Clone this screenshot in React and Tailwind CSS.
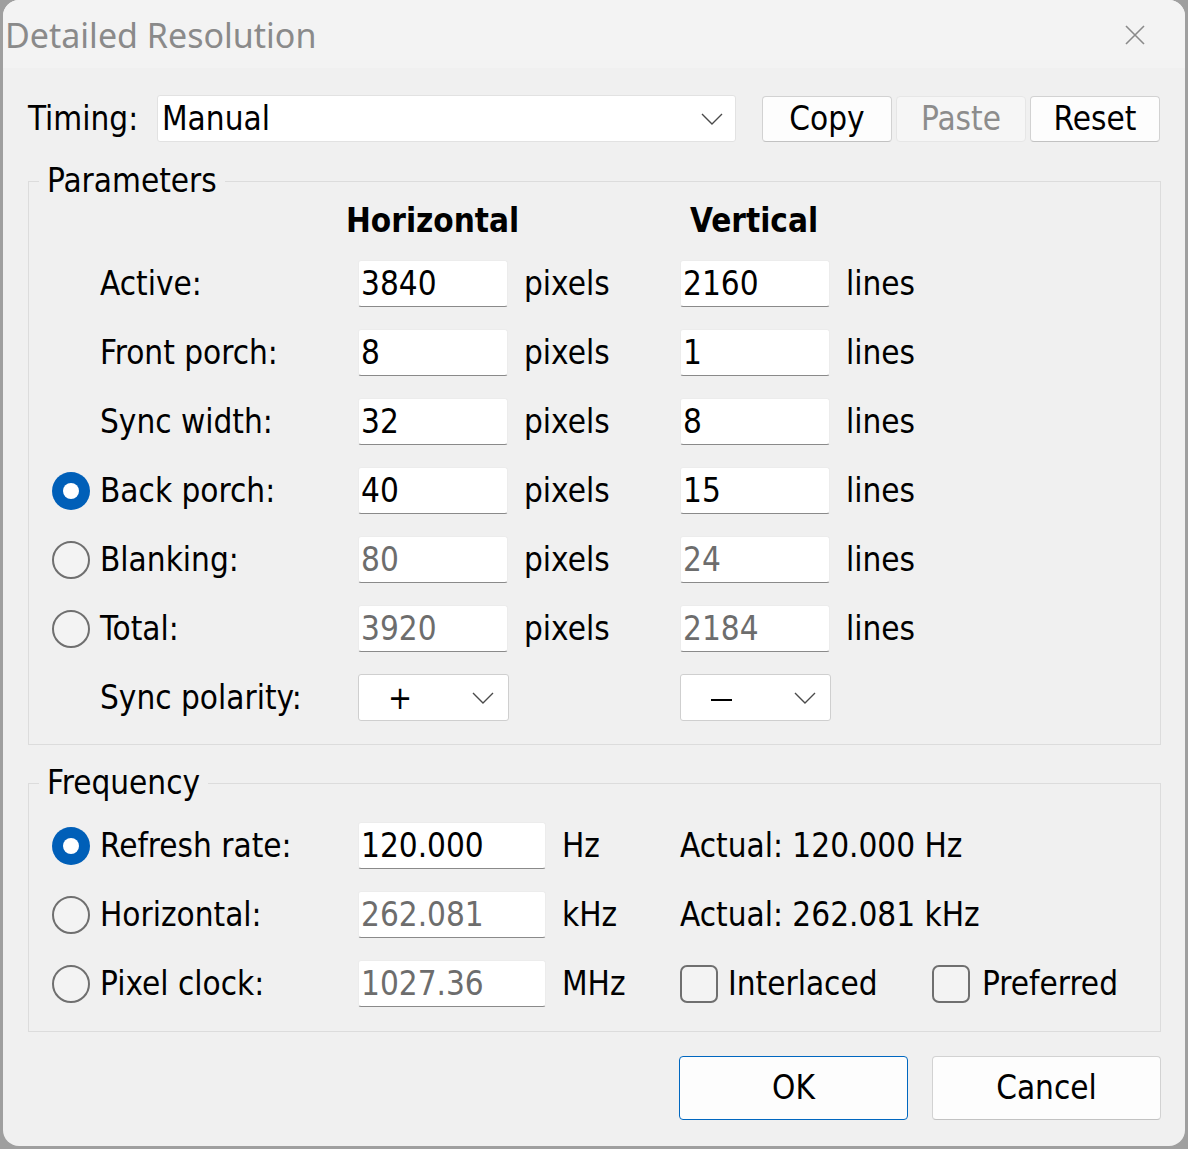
const body = { fontFamily: '"DejaVu Sans Condensed", "DejaVu Sans", sans-serif', fontStretch: 'condensed' }

function Chevron({ className }) {
  return (
    <svg className={className} width="22" height="12" viewBox="0 0 22 12" fill="none">
      <path d="M1 1 L11 11 L21 1" stroke="#4a4a4a" strokeWidth="1.4" />
    </svg>
  )
}

function Radio({ checked }) {
  if (checked) {
    return (
      <div className="w-[38px] h-[38px] rounded-full bg-[#005fb8] flex items-center justify-center shrink-0">
        <div className="w-[16px] h-[16px] rounded-full bg-white" />
      </div>
    )
  }
  return <div className="w-[38px] h-[38px] rounded-full border-[2px] border-[#6f6f6f] bg-[#f3f3f3] shrink-0" />
}

function Check() {
  return <div className="w-[38px] h-[38px] rounded-[7px] border-[2px] border-[#6f6f6f] bg-[#f3f3f3] shrink-0" />
}

function Field({ value, disabled, w = 'w-[150px]' }) {
  return (
    <div
      className={`${w} h-[47px] shrink-0 bg-white border border-[#ececec] border-b-[#8a8a8a] rounded-[3px] pl-[2px] flex items-center text-[33px] leading-none ${disabled ? 'text-[#6d6d6d]' : 'text-black'}`}
    >
      {value}
    </div>
  )
}

function ParamRow({ radio, label, h, v, disabled }) {
  return (
    <div className="h-[69px] flex items-center">
      <div className="w-[38px] shrink-0">{radio !== undefined && <Radio checked={radio} />}</div>
      <div className="w-[268px] shrink-0 pl-[10px]">{label}</div>
      <Field value={h} disabled={disabled} />
      <div className="w-[172px] shrink-0 pl-[16px]">pixels</div>
      <Field value={v} disabled={disabled} />
      <div className="pl-[16px]">lines</div>
    </div>
  )
}

function Polarity({ sign }) {
  return (
    <div className="w-[151px] h-[47px] shrink-0 bg-white border border-[#cfcfcf] rounded-[3px] flex items-center relative">
      {sign === '+' ? (
        <span className="absolute left-[29px] text-[32px] leading-none">+</span>
      ) : (
        <span className="absolute left-[30px] top-[24px] w-[21px] h-[2px] bg-black" />
      )}
      <Chevron className="absolute right-[14px]" />
    </div>
  )
}

function FreqRow({ radio, label, value, disabled, unit, children }) {
  return (
    <div className="h-[69px] flex items-center">
      <Radio checked={radio} />
      <div className="w-[268px] shrink-0 pl-[10px]">{label}</div>
      <Field value={value} disabled={disabled} w="w-[188px]" />
      <div className="w-[134px] shrink-0 pl-[16px]">{unit}</div>
      {children}
    </div>
  )
}

export default function App() {
  return (
    <div className="w-[1188px] h-[1149px] bg-[#9f9f9f] pl-[3px] pr-[3px] pb-[3px]" style={body}>
      <div className="w-[1182px] h-[1146px] bg-[#f0f0f0] rounded-[16px] overflow-hidden flex flex-col text-[33px] text-black">
        {/* title bar */}
        <div className="h-[68px] bg-[#f3f3f3] flex items-center justify-between shrink-0">
          <span
            className="pl-[2px] text-[34px] text-[#8a8a8a] leading-none mt-[2px]"
            style={{ fontFamily: '"Noto Sans", "Open Sans", sans-serif', fontStretch: 'normal' }}
          >
            Detailed Resolution
          </span>
          <svg className="mr-[40px] mt-[2px]" width="20" height="20" viewBox="0 0 20 20">
            <path d="M1 1 L19 19 M19 1 L1 19" stroke="#8a8a8a" strokeWidth="1.6" />
          </svg>
        </div>

        <div className="pl-[25px] pr-[22px] pt-[27px] flex flex-col">
          {/* timing row */}
          <div className="h-[47px] flex items-center">
            <span className="w-[129px] shrink-0">Timing:</span>
            <div className="w-[579px] h-[47px] bg-white border border-[#e2e2e2] rounded-[3px] flex items-center justify-between pl-[4px] pr-[12px]">
              <span>Manual</span>
              <Chevron />
            </div>
            <button className="ml-[26px] w-[130px] h-[46px] bg-[#fdfdfd] border border-[#d2d2d2] border-b-[#c2c2c2] rounded-[4px] flex items-center justify-center">
              Copy
            </button>
            <button className="ml-[4px] w-[130px] h-[46px] bg-[#f6f6f6] border border-[#e6e6e6] rounded-[4px] flex items-center justify-center text-[#8c8c8c]">
              Paste
            </button>
            <button className="ml-[4px] w-[130px] h-[46px] bg-[#fdfdfd] border border-[#d2d2d2] border-b-[#c2c2c2] rounded-[4px] flex items-center justify-center">
              Reset
            </button>
          </div>

          {/* parameters */}
          <fieldset className="mt-[19px] w-[1133px] border border-[#dcdcdc] pb-[12px]">
            <legend className="ml-[10px] px-[8px] h-[40px] leading-[40px]">Parameters</legend>
            <div className="pl-[23px]">
              <div className="h-[40px] flex items-center font-bold">
                <span className="ml-[294px] w-[344px]">Horizontal</span>
                <span>Vertical</span>
              </div>
              <div className="mt-[8px]">
                <ParamRow label="Active:" h="3840" v="2160" />
                <ParamRow label="Front porch:" h="8" v="1" />
                <ParamRow label="Sync width:" h="32" v="8" />
                <ParamRow radio={true} label="Back porch:" h="40" v="15" />
                <ParamRow radio={false} label="Blanking:" h="80" v="24" disabled />
                <ParamRow radio={false} label="Total:" h="3920" v="2184" disabled />
                <div className="h-[69px] flex items-center">
                  <div className="w-[38px] shrink-0" />
                  <div className="w-[268px] shrink-0 pl-[10px]">Sync polarity:</div>
                  <Polarity sign="+" />
                  <div className="w-[171px] shrink-0" />
                  <Polarity sign="-" />
                </div>
              </div>
            </div>
          </fieldset>

          {/* frequency */}
          <fieldset className="mt-[18px] w-[1133px] border border-[#dcdcdc] pb-[13px]">
            <legend className="ml-[10px] px-[8px] h-[40px] leading-[40px]">Frequency</legend>
            <div className="mt-[8px] pl-[23px]">
              <FreqRow radio={true} label="Refresh rate:" value="120.000" unit="Hz">
                <span>Actual: 120.000 Hz</span>
              </FreqRow>
              <FreqRow radio={false} label="Horizontal:" value="262.081" unit="kHz" disabled>
                <span>Actual: 262.081 kHz</span>
              </FreqRow>
              <FreqRow radio={false} label="Pixel clock:" value="1027.36" unit="MHz" disabled>
                <div className="flex items-center">
                  <Check />
                  <span className="ml-[10px] w-[204px]">Interlaced</span>
                  <Check />
                  <span className="ml-[12px]">Preferred</span>
                </div>
              </FreqRow>
            </div>
          </fieldset>

          {/* buttons */}
          <div className="mt-[24px] flex justify-end w-[1133px]">
            <button className="w-[229px] h-[64px] bg-[#fdfdfd] border border-[#0067c0] rounded-[4px] flex items-center justify-center">
              OK
            </button>
            <button className="ml-[24px] w-[229px] h-[64px] bg-[#fdfdfd] border border-[#d2d2d2] border-b-[#c2c2c2] rounded-[4px] flex items-center justify-center">
              Cancel
            </button>
          </div>
        </div>
      </div>
    </div>
  )
}
